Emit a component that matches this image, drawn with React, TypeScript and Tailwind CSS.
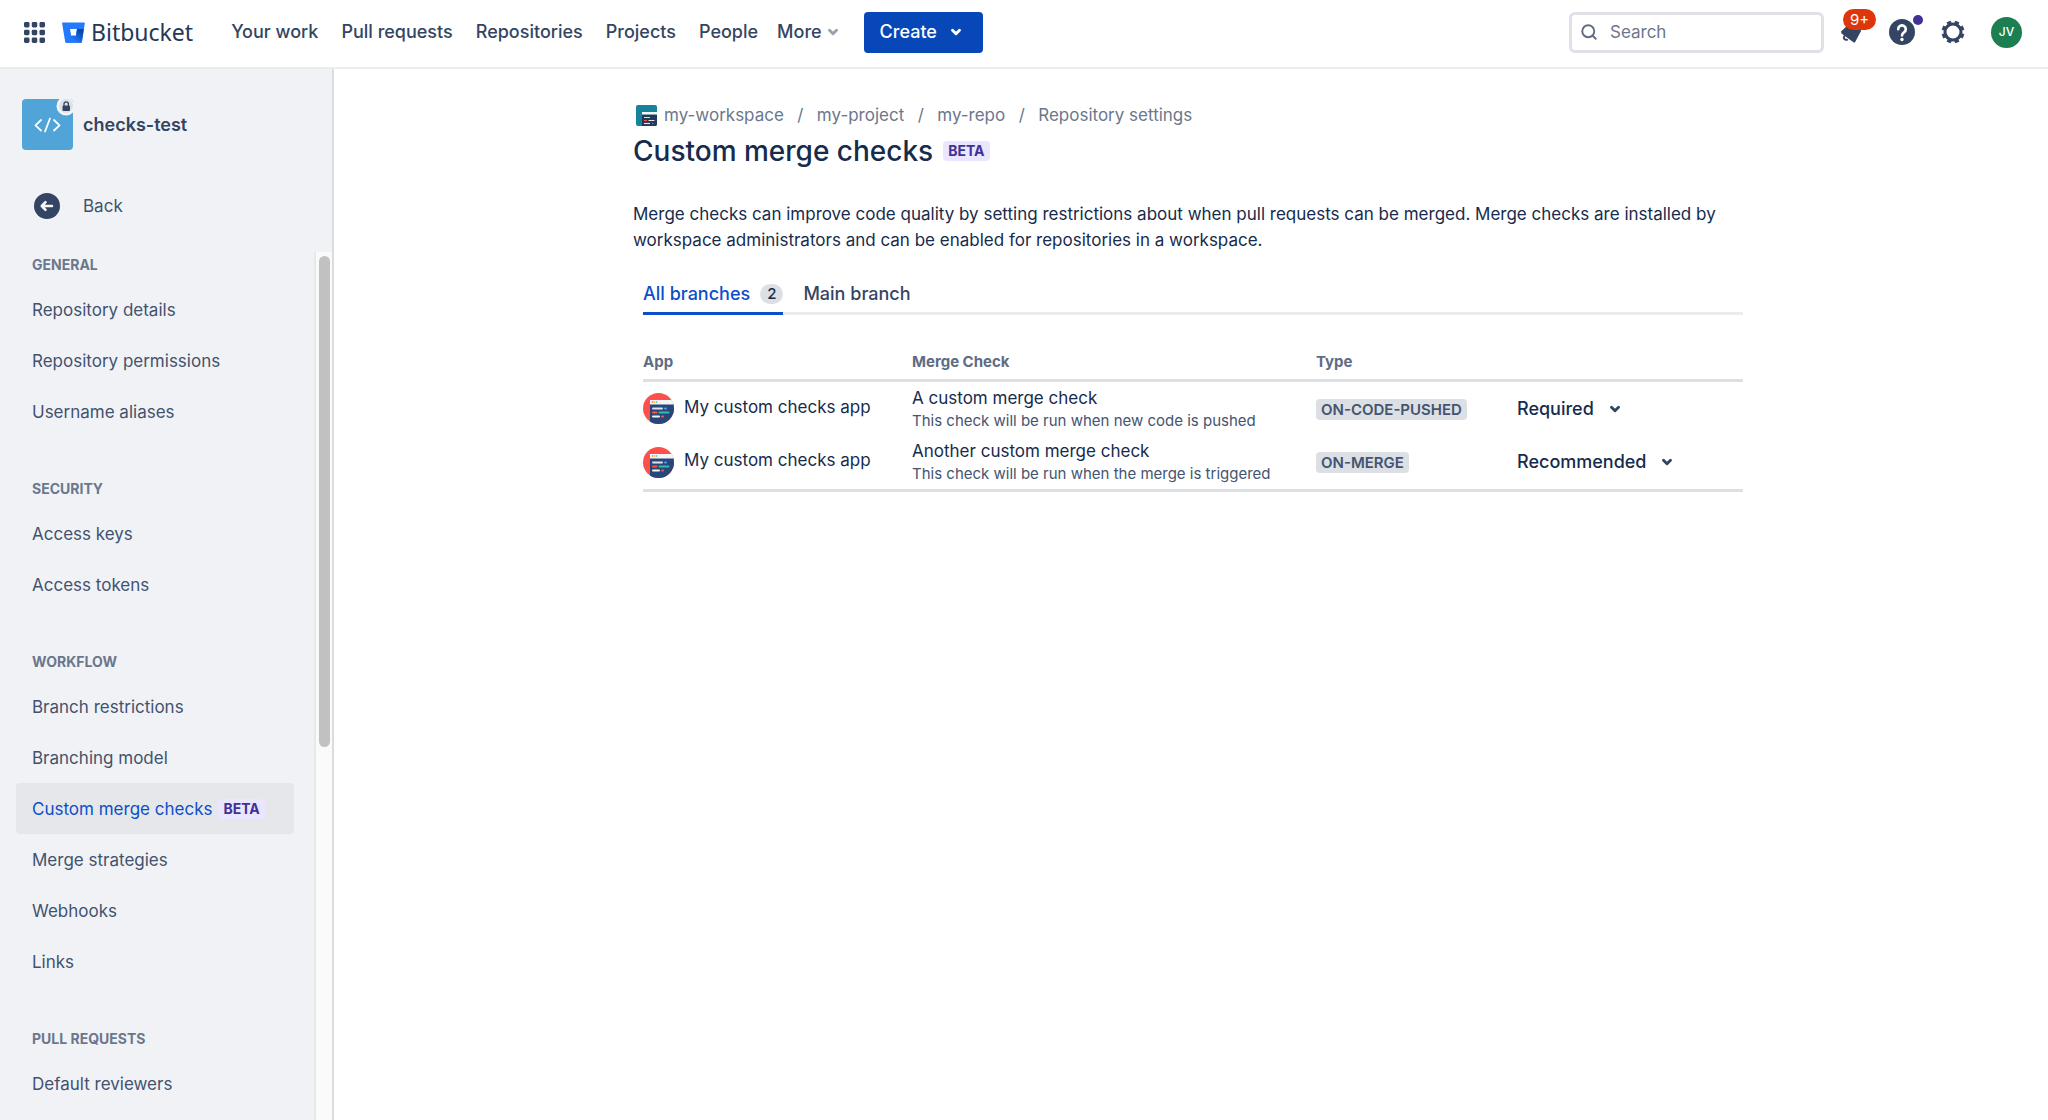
import { ChevronDown, Search } from "lucide-react";
import clsx from "clsx";

const navLinks = ["Your work", "Pull requests", "Repositories", "Projects", "People"];

const sections = [
  { title: "General", items: ["Repository details", "Repository permissions", "Username aliases"] },
  { title: "Security", items: ["Access keys", "Access tokens"] },
  {
    title: "Workflow",
    items: [
      "Branch restrictions",
      "Branching model",
      "Custom merge checks",
      "Merge strategies",
      "Webhooks",
      "Links",
    ],
  },
  { title: "Pull requests", items: ["Default reviewers"] },
];

const activeItem = "Custom merge checks";

const crumbs = ["my-workspace", "my-project", "my-repo", "Repository settings"];

const checks = [
  {
    app: "My custom checks app",
    name: "A custom merge check",
    description: "This check will be run when new code is pushed",
    type: "On-code-pushed",
    status: "Required",
  },
  {
    app: "My custom checks app",
    name: "Another custom merge check",
    description: "This check will be run when the merge is triggered",
    type: "On-merge",
    status: "Recommended",
  },
];

function BetaBadge() {
  return (
    <span className="rounded-[4px] bg-[#eae6ff] px-[5px] text-sm leading-5 font-bold text-[#403294]">
      BETA
    </span>
  );
}

function AppSwitcherIcon() {
  return (
    <svg className="size-[21px]" viewBox="0 0 21 21" fill="#344563">
      {[0, 7.75, 15.5].map((y) =>
        [0, 7.75, 15.5].map((x) => (
          <rect key={`${x}-${y}`} x={x} y={y} width="5.5" height="5.5" rx="1.4" />
        ))
      )}
    </svg>
  );
}

function BitbucketMark() {
  return (
    <svg className="h-[21px] w-[23px]" viewBox="0 0 23 21">
      <defs>
        <linearGradient id="bb" x1="1" y1="0.2" x2="0.4" y2="0.8">
          <stop offset="0.1" stopColor="#0747a6" />
          <stop offset="1" stopColor="#2579ff" />
        </linearGradient>
      </defs>
      <path
        d="M.8.5h21.4c.4 0 .7.4.6.8L19.9 20c-.1.4-.4.7-.8.7H4.2c-.5 0-.9-.3-1-.8L.1 1.3C0 .9.4.5.8.5zM9.2 13.8h4.700l1.100-6.700H8z"
        fill="#2579ff"
        fillRule="evenodd"
      />
      <path
        d="M21.800 7.100H15l-1.100 6.700H9.200L3.700 20.400c.2.200.4.300.6.300h14.800c.4 0 .7-.3.8-.7z"
        fill="url(#bb)"
      />
    </svg>
  );
}

function RepoAvatar() {
  return (
    <div className="relative size-[51px] shrink-0 overflow-hidden rounded-[4px] bg-[#50a4d8]">
      <svg
        className="absolute inset-0 size-full"
        viewBox="0 0 51 51"
        fill="none"
        stroke="white"
        strokeWidth="1.8"
        strokeLinecap="round"
        strokeLinejoin="round"
      >
        <path d="M19 21l-5.500 5.300L19 31.500M32 21l5.500 5.300-5.500 5.200M28 19.500l-5 13" />
      </svg>
      <svg className="absolute inset-0 size-full" viewBox="0 0 51 51">
        <circle cx="44" cy="7" r="9.5" fill="#f4f5f7" />
        <circle cx="44" cy="7" r="7" fill="#dfe1e6" />
        <rect x="40.5" y="6.5" width="7.5" height="5.5" rx="1" fill="#344563" />
        <path d="M42 7V5a2.200 2.200 0 0 1 4.400 0v2" fill="none" stroke="#344563" strokeWidth="1.3" />
      </svg>
    </div>
  );
}

function BackIcon() {
  return (
    <svg className="size-[26px]" viewBox="0 0 26 26">
      <circle cx="13" cy="13" r="13" fill="#344563" />
      <path
        d="M18 13H8.500M11.500 9.200L7.800 13l3.700 3.800"
        fill="none"
        stroke="#f4f5f7"
        strokeWidth="2.6"
        strokeLinecap="round"
        strokeLinejoin="round"
      />
    </svg>
  );
}

function WorkspaceIcon() {
  return (
    <svg className="ml-[3px] size-[21px]" viewBox="0 0 21 21">
      <rect width="21" height="21" rx="2" fill="#15849a" />
      <path d="M6 9.500h15V19a2 2 0 0 1-2 2H6z" fill="#253858" />
      <path d="M6 7h15v2.500H6z" fill="#f4f5f7" />
      <path d="M8 12.500h6M12.500 15.500h6" stroke="#dfe1e6" strokeWidth="1.2" />
      <path d="M8 15.500h3M16 18.500h1.500" stroke="#ff5630" strokeWidth="1.2" />
      <path d="M8 18.500h6" stroke="#dfe1e6" strokeWidth="1.2" />
    </svg>
  );
}

function AppIcon() {
  return (
    <svg className="size-[31px] shrink-0" viewBox="0 0 31 31">
      <defs>
        <clipPath id="app-circle">
          <circle cx="15.5" cy="15.5" r="15.5" />
        </clipPath>
      </defs>
      <g clipPath="url(#app-circle)">
        <rect width="31" height="31" fill="#ff4f4a" />
        <rect x="7" y="11" width="24" height="20" fill="#284778" />
        <rect x="7" y="7" width="24" height="4.5" fill="#f4f5f7" />
        <circle cx="9.5" cy="9" r="0.8" fill="#ff5630" />
        <circle cx="11.5" cy="9" r="0.8" fill="#ffab00" />
        <circle cx="13.5" cy="9" r="0.8" fill="#36b37e" />
        <g strokeWidth="2" strokeLinecap="round">
          <path d="M10 15.500h9" stroke="#dfe1e6" />
          <path d="M22 15.500h1" stroke="#4c9aff" />
          <path d="M10 19.500h3.500" stroke="#ff5630" />
          <path d="M16.500 19.500h9" stroke="#36b8b3" />
          <path d="M10 23.500h6" stroke="#f4f5f7" />
          <path d="M19 23.500h1" stroke="#ff5630" />
        </g>
      </g>
    </svg>
  );
}

function BellIcon() {
  return (
    <svg className="size-[22px]" viewBox="0 0 22 22" fill="#344563">
      <path d="M0 10.500L8 3h11l1 7-5.800 11c-.4.700-1.200.8-1.800.3L.5 12.500z" />
      <path
        d="M3.300 15.200c-1.200 1.800.3 4 2.700 3.600"
        fill="none"
        stroke="#344563"
        strokeWidth="2"
        strokeLinecap="round"
      />
    </svg>
  );
}

function HelpIcon() {
  return (
    <svg className="size-[26px]" viewBox="0 0 26 26">
      <circle cx="13" cy="13" r="13" fill="#344563" />
      <path
        d="M9.200 10.200a3.800 3.800 0 1 1 5.800 3.200c-1.300.9-2 1.500-2 3"
        fill="none"
        stroke="white"
        strokeWidth="2.6"
        strokeLinecap="round"
      />
      <circle cx="13" cy="20.5" r="1.7" fill="white" />
    </svg>
  );
}

function GearIcon() {
  return (
    <svg className="size-[24px]" viewBox="0 0 24 24" fill="none" stroke="#344563">
      <circle cx="12" cy="12" r="8" strokeWidth="3" />
      {[22.5, 67.5, 112.5, 157.5, 202.5, 247.5, 292.5, 337.5].map((angle) => (
        <path key={angle} d="M12 3.500V.6" strokeWidth="4.4" transform={`rotate(${angle} 12 12)`} />
      ))}
    </svg>
  );
}

function Header() {
  return (
    <header className="flex h-[69px] shrink-0 items-center border-b-2 border-[#ebecf0] bg-white pr-[26px] pb-[3px] pl-6 text-[#344563]">
      <button type="button" aria-label="Switch app">
        <AppSwitcherIcon />
      </button>
      <a href="#" className="ml-[17px] flex items-center gap-1.5 text-[#253858]">
        <BitbucketMark />
        <span className="font-['Noto_Sans',sans-serif] text-[23px] leading-7">Bitbucket</span>
      </a>
      <nav className="ml-[38px] flex items-center gap-[23px] font-medium">
        {navLinks.map((link) => (
          <a key={link} href="#">
            {link}
          </a>
        ))}
        <button type="button" className="-ml-1 flex items-center gap-1">
          More
          <ChevronDown className="size-3.5 text-[#97a0af]" strokeWidth={5} />
        </button>
      </nav>
      <button
        type="button"
        className="ml-6 flex h-[41px] items-center gap-3 rounded-[4px] bg-[#0747b8] pr-5 pl-4 font-medium text-white"
      >
        Create
        <ChevronDown className="size-3.5" strokeWidth={5} />
      </button>
      <div className="ml-auto flex items-center">
        <label className="flex h-[41px] w-[255px] items-center rounded-[6px] border-[3px] border-[#dfe1e6] px-2">
          <Search className="size-[18px] shrink-0 text-[#5e6c84]" strokeWidth={2.5} />
          <input
            type="text"
            aria-label="Search"
            placeholder="Search"
            className="ml-3 w-full min-w-0 text-[17px] outline-none placeholder:text-[#6b778c]"
          />
        </label>
        <button type="button" aria-label="Notifications" className="relative ml-[17px]">
          <BellIcon />
          <span className="absolute -top-3 left-0.5 rounded-full bg-[#de350b] px-[7px] text-[15px] leading-[21px] text-white">
            9+
          </span>
        </button>
        <button type="button" aria-label="Help" className="relative ml-[26px]">
          <HelpIcon />
          <span className="absolute -top-1 left-6 size-2.5 rounded-full bg-[#403294]" />
        </button>
        <button type="button" aria-label="Settings" className="ml-[26px]">
          <GearIcon />
        </button>
        <button
          type="button"
          className="ml-[26px] flex size-[31px] items-center justify-center rounded-full bg-[#1b7f52] text-xs font-medium text-white"
        >
          JV
        </button>
      </div>
    </header>
  );
}

function Sidebar() {
  return (
    <aside className="flex w-[334px] shrink-0 flex-col border-r-2 border-[#dadce2] bg-[#f1f2f6]">
      <div className="flex items-center gap-2.5 px-[22px] pt-[30px] text-[18px] font-semibold text-[#344563]">
        <RepoAvatar />
        checks-test
      </div>
      <a href="#" className="mt-[30px] flex h-[51px] items-center gap-[23px] px-[34px]">
        <BackIcon />
        Back
      </a>
      <div className="mt-[21px] flex min-h-0 flex-1">
        <nav className="min-w-0 flex-1 overflow-hidden pr-5 pl-4">
          {sections.map((section) => (
            <div key={section.title} className="mb-[39px]">
              <h2 className="px-4 pt-[3px] pb-2 text-sm leading-5 font-bold text-[#6b778c] uppercase">
                {section.title}
              </h2>
              <ul className="pt-px">
                {section.items.map((item) => (
                  <li key={item}>
                    <a
                      href="#"
                      className={clsx(
                        "flex h-[51px] items-center gap-1.5 rounded-[4px] px-4 whitespace-nowrap",
                        item === activeItem && "bg-[#e6e7eb] text-[#0c4fc9]"
                      )}
                    >
                      {item}
                      {item === activeItem && <BetaBadge />}
                    </a>
                  </li>
                ))}
              </ul>
            </div>
          ))}
        </nav>
        {/* Scrollbar track */}
        <div className="w-[18px] shrink-0 border-l-2 border-[#e8e8e8] bg-[#fafafa] px-[3px] pt-1">
          <div className="h-[491px] w-[11px] rounded-full bg-[#c1c1c1]" />
        </div>
      </div>
    </aside>
  );
}

function ChecksTable() {
  return (
    <table className="mt-[37px] w-full table-fixed border-b-[3px] border-[#dcdfe4] text-left">
      <thead className="border-b-[3px] border-[#dcdfe4] text-[15px] leading-5 text-[#5e6c84]">
        <tr>
          <th className="w-[269px] pb-[7px] font-bold">App</th>
          <th className="w-[404px] pb-[7px] font-bold">Merge Check</th>
          <th className="w-[201px] pb-[7px] font-bold">Type</th>
          <th aria-label="Status" />
        </tr>
      </thead>
      <tbody>
        {checks.map((check) => (
          <tr key={check.name} className="h-[55px]">
            <td>
              <div className="flex items-center gap-2.5">
                <AppIcon />
                <span className="pb-1">{check.app}</span>
              </div>
            </td>
            <td>
              <div className="leading-6">{check.name}</div>
              <div className="text-[15px] leading-[22px] text-[#44546f]">{check.description}</div>
            </td>
            <td>
              <span className="rounded-[4px] bg-[#dcdfe4] px-[5px] py-px text-[15px] leading-4 font-semibold text-[#44546f] uppercase">
                {check.type}
              </span>
            </td>
            <td>
              <button type="button" className="flex items-center gap-3.5 text-[18px] font-medium">
                {check.status}
                <ChevronDown className="size-3.5 text-[#344563]" strokeWidth={5} />
              </button>
            </td>
          </tr>
        ))}
      </tbody>
    </table>
  );
}

export default function App() {
  return (
    <div className="flex h-screen flex-col overflow-hidden bg-white font-[Inter,sans-serif] text-[18px] leading-[26px] text-[#172b4d]">
      <Header />
      <div className="flex min-h-0 flex-1 text-[17px] text-[#42526e]">
        <Sidebar />
        <main className="min-w-0 flex-1 overflow-hidden pt-[33px] pr-10 pl-11 text-[#172b4d]">
          <div className="mx-auto max-w-[1120px]">
            <nav aria-label="Breadcrumb">
              <ol className="flex items-center text-[#6b778c]">
                {crumbs.map((crumb, i) => (
                  <li key={crumb} className="flex items-center">
                    {i > 0 && <span className="w-[33px] text-center">/</span>}
                    <a href="#" className="flex items-center gap-[7px]">
                      {i === 0 && <WorkspaceIcon />}
                      {crumb}
                    </a>
                  </li>
                ))}
              </ol>
            </nav>
            <div className="mt-[5px] flex items-center gap-2.5">
              <h1 className="text-[28px] leading-9 font-medium">Custom merge checks</h1>
              <BetaBadge />
            </div>
            <p className="mt-8">
              Merge checks can improve code quality by setting restrictions about when pull requests
              can be merged. Merge checks are installed by workspace administrators and can be
              enabled for repositories in a workspace.
            </p>
            <div className="px-2.5">
              <div
                role="tablist"
                className="mt-5 flex gap-5 border-b-[3px] border-[#ebecf0] text-[18px] font-medium"
              >
                <button
                  type="button"
                  role="tab"
                  aria-selected="true"
                  className="-mb-[3px] flex items-center gap-2.5 border-b-[3px] border-[#0c4fc9] pt-2 pb-[5px] text-[#0c4fc9]"
                >
                  All branches
                  <span className="rounded-full bg-[#dcdfe4] px-[7px] text-[15px] leading-5 text-[#172b4d]">
                    2
                  </span>
                </button>
                <button
                  type="button"
                  role="tab"
                  aria-selected="false"
                  className="pt-2 pb-[5px] text-[#344563]"
                >
                  Main branch
                </button>
              </div>
              <ChecksTable />
            </div>
          </div>
        </main>
      </div>
    </div>
  );
}
